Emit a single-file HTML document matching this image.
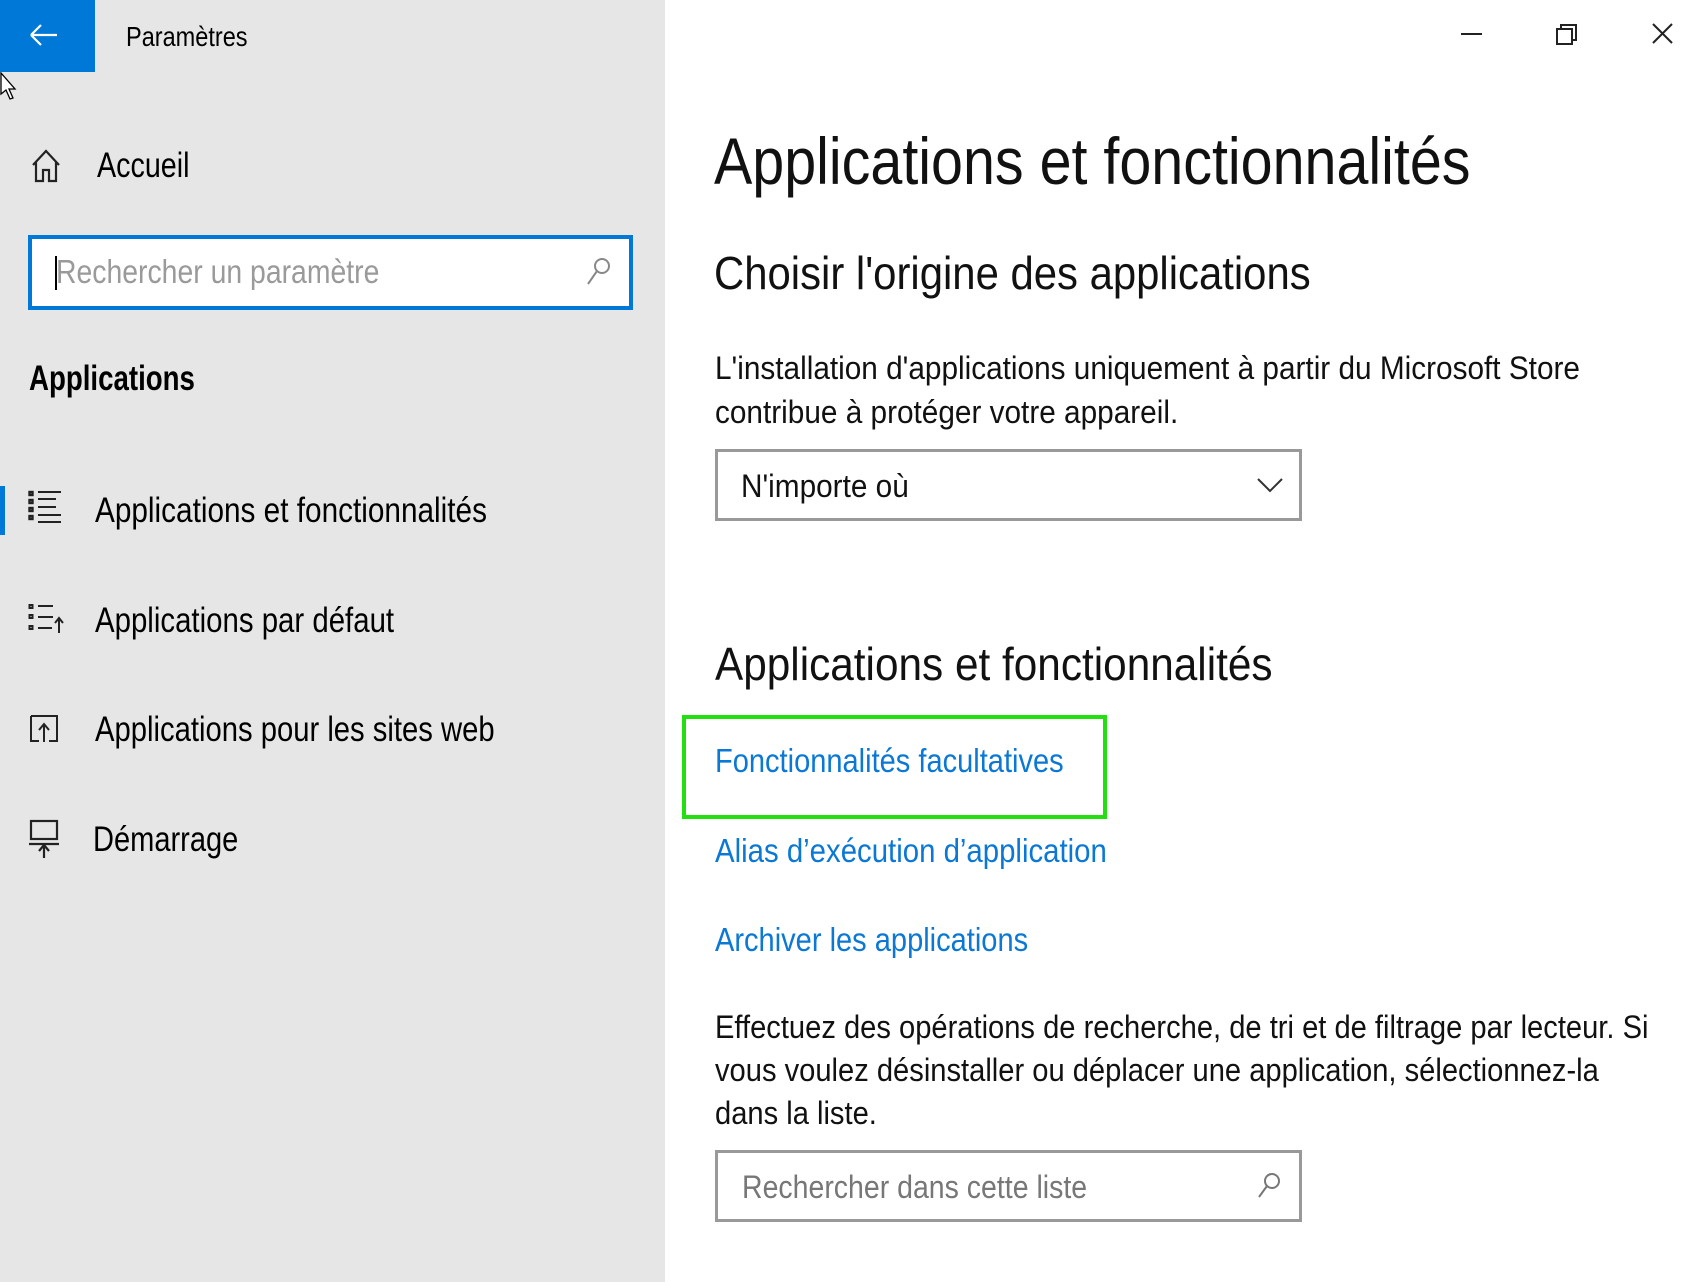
<!DOCTYPE html>
<html><head><meta charset="utf-8">
<style>
body{margin:0;width:1698px;height:1282px;overflow:hidden;background:#fff;font-family:"Liberation Sans",sans-serif;position:relative}
.t{position:absolute;white-space:nowrap;transform:scaleX(.84);transform-origin:0 50%;color:#000}
.p{transform:scaleX(.92)}
.side{position:absolute;left:0;top:0;width:665px;height:1282px;background:#e6e6e6}
.ico{position:absolute}
</style></head><body>
<div class="side"></div>
<div style="position:absolute;left:0;top:0;width:95px;height:72px;background:#0078d7"></div>
<svg class="ico" style="left:28px;top:22px" width="32" height="26"><path d="M3 13H29M3 13L13 3M3 13L13 23" stroke="#fff" stroke-width="2.2" fill="none"/></svg>
<div class="t" style="left:126px;top:22px;font-size:28px;line-height:30px">Paramètres</div>
<svg class="ico" style="left:0;top:72px" width="18" height="34"><path d="M1 1L1 22L6 18L10 27L13 26L9 17L15 17Z" fill="#fff" stroke="#000" stroke-width="1.3"/></svg>
<svg class="ico" style="left:30px;top:148px" width="34" height="36"><path d="M3 17L16 3L29 17M6 14V33H13V22H19V33H26V14" stroke="#222" stroke-width="2.2" fill="none"/></svg>
<div class="t" style="left:97px;top:147px;font-size:35px;line-height:38px;transform:scaleX(.82)">Accueil</div>
<div style="position:absolute;left:28px;top:235px;width:597px;height:67px;border:4px solid #0078d7;background:#fff"></div>
<div style="position:absolute;left:55px;top:256px;width:2px;height:34px;background:#000"></div>
<div class="t" style="left:56px;top:254px;font-size:33px;line-height:36px;color:#9a9a9a;transform:scaleX(.86)">Rechercher un paramètre</div>
<svg class="ico" style="left:585px;top:256px" width="28" height="32"><circle cx="17" cy="10" r="7" stroke="#888" stroke-width="2" fill="none"/><path d="M12 15L3 28" stroke="#888" stroke-width="2"/></svg>
<div class="t" style="left:29px;top:360px;font-size:35px;line-height:38px;font-weight:bold;transform:scaleX(.79)">Applications</div>
<div style="position:absolute;left:0;top:486px;width:5px;height:49px;background:#0078d7"></div>
<svg class="ico" style="left:28px;top:490px" width="36" height="36" stroke="#222" stroke-width="2.4" fill="none"><rect x="1.5" y="2" width="3" height="3"/><rect x="1.5" y="10" width="3" height="3"/><rect x="1.5" y="18" width="3" height="3"/><rect x="1.5" y="26" width="3" height="3"/><path d="M10 2H33M10 9H28M10 17H28M10 25H33M10 32H33" stroke-width="2"/></svg>
<div class="t" style="left:95px;top:492px;font-size:35px;line-height:38px;transform:scaleX(.85)">Applications et fonctionnalités</div>
<svg class="ico" style="left:28px;top:603px" width="36" height="34" stroke="#222" stroke-width="2" fill="none"><rect x="1.5" y="2" width="3" height="3"/><rect x="1.5" y="12" width="3" height="3"/><rect x="1.5" y="23" width="3" height="3"/><path d="M10 3H25M10 14H25M10 25H24M31 30V16M27 20L31 15L35 20"/></svg>
<div class="t" style="left:95px;top:602px;font-size:35px;line-height:38px">Applications par défaut</div>
<svg class="ico" style="left:29px;top:714px" width="32" height="32" stroke="#222" stroke-width="2" fill="none"><path d="M2 2H28V27H20M10 27H2V2"/><path d="M15 28V11M10 16L15 10L20 16"/></svg>
<div class="t" style="left:95px;top:711px;font-size:35px;line-height:38px;transform:scaleX(.835)">Applications pour les sites web</div>
<svg class="ico" style="left:29px;top:819px" width="32" height="40" stroke="#222" stroke-width="2.2" fill="none"><rect x="2" y="2" width="26" height="18"/><path d="M0 25H30M15 39V27M10 32L15 26L20 32"/></svg>
<div class="t" style="left:93px;top:821px;font-size:35px;line-height:38px;transform:scaleX(.83)">Démarrage</div>

<svg class="ico" style="left:1458px;top:20px" width="230" height="30" stroke="#222" stroke-width="2" fill="none"><path d="M3 14H24"/><rect x="99" y="9" width="15" height="15"/><path d="M103 9V5H118V20H114"/><path d="M195 4L214 23M214 4L195 23"/></svg>

<div class="t" style="left:714px;top:126px;font-size:66px;line-height:70px;color:#111;transform:scaleX(.87)">Applications et fonctionnalités</div>
<div class="t" style="left:714px;top:248px;font-size:46px;line-height:50px;color:#111;transform:scaleX(.91)">Choisir l'origine des applications</div>
<div class="t p" style="left:715px;top:350px;font-size:32px;line-height:36px;color:#111;transform:scaleX(.93)">L'installation d'applications uniquement à partir du Microsoft Store</div>
<div class="t p" style="left:715px;top:394px;font-size:32px;line-height:36px;color:#111;transform:scaleX(.93)">contribue à protéger votre appareil.</div>
<div style="position:absolute;left:715px;top:449px;width:581px;height:66px;border:3px solid #999;background:#fff"></div>
<div class="t" style="left:741px;top:468px;font-size:32px;line-height:36px;color:#111;transform:scaleX(.93)">N'importe où</div>
<svg class="ico" style="left:1256px;top:476px" width="28" height="18"><path d="M2 3L14 15L26 3" stroke="#333" stroke-width="2" fill="none"/></svg>
<div class="t" style="left:715px;top:639px;font-size:46px;line-height:50px;color:#111;transform:scaleX(.92)">Applications et fonctionnalités</div>
<div style="position:absolute;left:682px;top:715px;width:417px;height:96px;border:4px solid #22e010"></div>
<div class="t" style="left:715px;top:743px;font-size:33px;line-height:36px;color:#0a78d4;transform:scaleX(.88)">Fonctionnalités facultatives</div>
<div class="t" style="left:715px;top:833px;font-size:33px;line-height:36px;color:#0a78d4;transform:scaleX(.89)">Alias d’exécution d’application</div>
<div class="t" style="left:715px;top:922px;font-size:33px;line-height:36px;color:#0a78d4;transform:scaleX(.88)">Archiver les applications</div>
<div class="t p" style="left:715px;top:1009px;font-size:32px;line-height:36px;color:#111;transform:scaleX(.91)">Effectuez des opérations de recherche, de tri et de filtrage par lecteur. Si</div>
<div class="t p" style="left:715px;top:1052px;font-size:32px;line-height:36px;color:#111;transform:scaleX(.91)">vous voulez désinstaller ou déplacer une application, sélectionnez-la</div>
<div class="t p" style="left:715px;top:1095px;font-size:32px;line-height:36px;color:#111;transform:scaleX(.91)">dans la liste.</div>
<div style="position:absolute;left:715px;top:1150px;width:581px;height:66px;border:3px solid #999;background:#fff"></div>
<div class="t" style="left:742px;top:1169px;font-size:32px;line-height:36px;color:#777;transform:scaleX(.89)">Rechercher dans cette liste</div>
<svg class="ico" style="left:1254px;top:1170px" width="30" height="32"><circle cx="18" cy="11" r="7" stroke="#777" stroke-width="2" fill="none"/><path d="M13 16L5 27" stroke="#777" stroke-width="2"/></svg>
</body></html>
